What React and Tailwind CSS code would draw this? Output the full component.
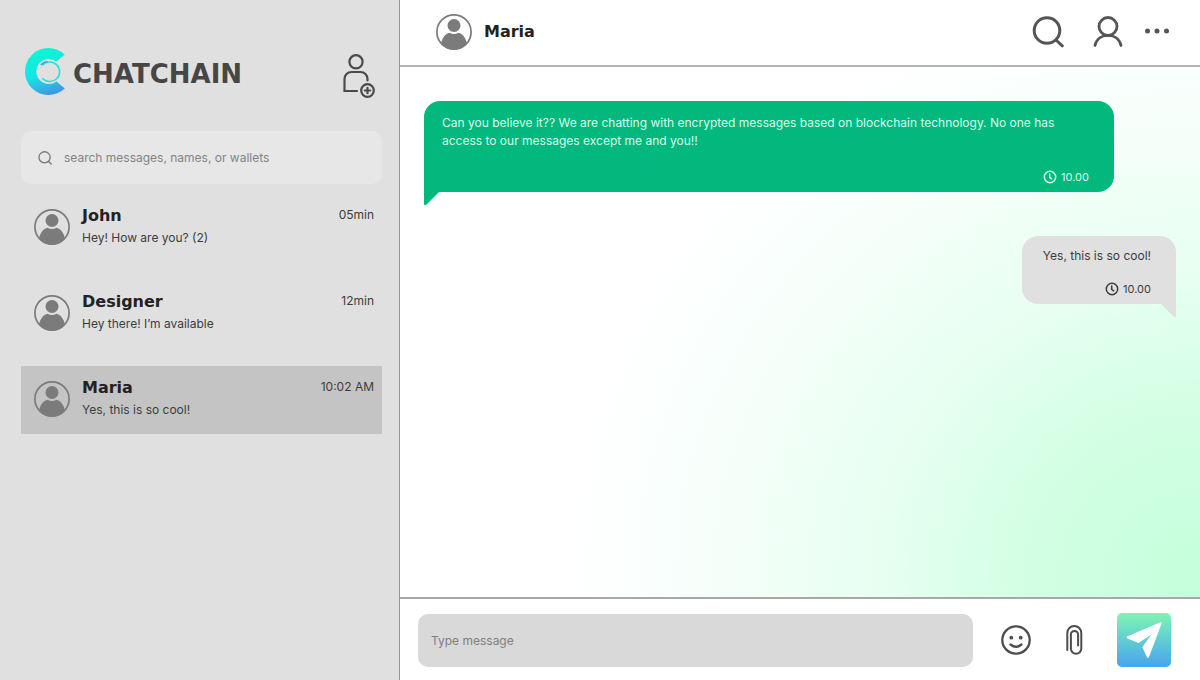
const chats = [
  { name: "John", text: "Hey! How are you? (2)", time: "05min", active: false },
  { name: "Designer", text: "Hey there! I’m available", time: "12min", active: false },
  { name: "Maria", text: "Yes, this is so cool!", time: "10:02 AM", active: true },
];

function Avatar() {
  return (
    <svg className="size-9 shrink-0" viewBox="0 0 36 36" fill="none" aria-hidden="true">
      <circle cx="18" cy="18" r="17.1" stroke="#7b7b7b" strokeWidth="1.7" />
      <circle cx="18" cy="11.500" r="6.500" fill="#7b7b7b" />
      <path d="M5 29.800C6 24 9.500 19.600 13.500 18.800Q18 21.200 22.500 18.800C26.500 19.600 30 24 31 29.800A17.600 17.600 0 0 1 5 29.800Z" fill="#7b7b7b" />
    </svg>
  );
}

function LogoMark() {
  return (
    <svg className="h-12 w-11 shrink-0" viewBox="0 0 44 48" fill="none" aria-hidden="true">
      <defs>
        <linearGradient id="mark" x1="16" y1="2" x2="30" y2="48" gradientUnits="userSpaceOnUse">
          <stop stopColor="#0cf5d4" />
          <stop offset="0.5" stopColor="#16e4e6" />
          <stop offset="1" stopColor="#4a8be0" />
        </linearGradient>
      </defs>
      <path d="M39.800 6.600A23.500 23.500 0 1 0 39.800 40.400L31.500 33.400A12.500 12.500 0 1 1 31.500 13.600Z" fill="url(#mark)" />
      <path d="M17.500 17.200A9.800 9.800 0 1 1 17.500 30.200" stroke="#27dfd8" strokeWidth="1.500" />
      <path d="M15.800 17.200A10 10 0 0 1 22.500 13.300" stroke="#3f9fe0" strokeWidth="1.300" />
    </svg>
  );
}

function AddContactIcon() {
  return (
    <svg className="h-11 w-8" viewBox="0 0 32 44" fill="none" stroke="#4a4a4a" strokeWidth="2.200" strokeLinecap="round" aria-hidden="true">
      <circle cx="13" cy="7.800" r="6.600" />
      <path d="M14 37H1.500V25A7 7 0 0 1 8.500 18H17.500A7 7 0 0 1 24.500 25V26.500" />
      <circle cx="24.500" cy="36.500" r="6.300" />
      <path d="M21.800 36.500H27.200M24.500 33.800V39.200" />
    </svg>
  );
}

function SearchIcon({ className }) {
  return (
    <svg className={className} viewBox="0 0 32 32" fill="none" stroke="currentColor" strokeLinecap="round" aria-hidden="true">
      <circle cx="15" cy="14.500" r="12.800" />
      <path d="M24 24L30.300 29.800" />
    </svg>
  );
}

function Clock() {
  return (
    <svg className="size-[14px]" viewBox="0 0 14 14" fill="none" stroke="currentColor" strokeWidth="1.500" strokeLinecap="round" aria-hidden="true">
      <circle cx="7" cy="7" r="5.700" />
      <path d="M6.700 3.900V7.300L8.600 8.800" />
    </svg>
  );
}

export default function App() {
  return (
    <div className="flex min-h-screen bg-white font-['Inter',sans-serif] text-[#3c3c3c]">
      <aside className="w-1/3 shrink-0 border-r border-[#999999] bg-[#e0e0e0] pt-12 pr-[17px] pl-[21px]">
        <header className="flex items-start justify-between pr-[7px] pl-1">
          <div className="flex items-center gap-1">
            <LogoMark />
            <h1 className="pt-[3px] font-['DejaVu_Sans',sans-serif] text-[26px] leading-8 font-bold text-[#464646]">CHATCHAIN</h1>
          </div>
          <button type="button" aria-label="Add contact" className="mt-[6px]">
            <AddContactIcon />
          </button>
        </header>

        <label className="mt-[33px] flex h-[53px] items-center gap-3 rounded-[10px] bg-[#e7e7e7] px-[17px] text-[#777777]">
          <SearchIcon className="size-[14px] stroke-3" />
          <input
            type="search"
            aria-label="Search"
            placeholder="search messages, names, or wallets"
            className="min-w-0 flex-1 bg-transparent text-xs leading-5 outline-none placeholder:text-[#848484]"
          />
        </label>

        <nav aria-label="Conversations" className="mt-[10px] flex flex-col gap-[18px]">
          {chats.map((chat) => (
            <button
              key={chat.name}
              type="button"
              className={`flex h-[68px] items-start gap-3 pr-2 pl-[13px] text-left ${chat.active ? "bg-[#c4c4c4]" : ""}`}
            >
              <span className="mt-[15px]">
                <Avatar />
              </span>
              <span className="mt-3 flex min-w-0 flex-1 flex-col gap-[3px]">
                <span className="flex items-start justify-between">
                  <span className="font-['DejaVu_Sans',sans-serif] text-base leading-5 font-bold text-[#222222]">{chat.name}</span>
                  <span className="text-xs leading-[18px]">{chat.time}</span>
                </span>
                <span className="text-xs leading-[18px]">{chat.text}</span>
              </span>
            </button>
          ))}
        </nav>
      </aside>

      <main className="flex min-w-0 flex-1 flex-col">
        <header className="flex h-[67px] items-center justify-between border-b-2 border-[#b4b4b4] pr-[30px] pb-0.5 pl-9">
          <div className="flex items-center gap-3">
            <Avatar />
            <h2 className="font-['DejaVu_Sans',sans-serif] text-base leading-5 font-bold text-[#222222]">Maria</h2>
          </div>
          <div className="flex items-center text-[#555555]">
            <button type="button" aria-label="Search conversation">
              <SearchIcon className="size-8 stroke-3" />
            </button>
            <button type="button" aria-label="Contact profile" className="ml-7">
              <svg className="size-8" viewBox="0 0 32 32" fill="none" stroke="currentColor" strokeWidth="2.800" strokeLinecap="round" aria-hidden="true">
                <circle cx="16" cy="10.500" r="9" />
                <path d="M3 29.500C4.500 22.500 10 19.300 16 19.300S27.500 22.500 29 29.500" />
              </svg>
            </button>
            <button type="button" aria-label="More options" className="ml-5">
              <svg className="h-8 w-[26px]" viewBox="0 0 26 32" fill="currentColor" aria-hidden="true">
                <circle cx="3.500" cy="15" r="2.500" />
                <circle cx="13" cy="15" r="2.500" />
                <circle cx="22.500" cy="15" r="2.500" />
              </svg>
            </button>
          </div>
        </header>

        <section
          aria-label="Messages"
          className="flex flex-1 flex-col bg-[radial-gradient(ellipse_80%_112%_at_100%_96%,#c4ffdb_0%,#d3ffe4_28%,#e8fff2_52%,#f7fffb_78%,#ffffff_100%)] pt-[34px] pr-6 pl-6"
        >
          <article className="relative mr-[62px] flex min-h-[91px] flex-col rounded-[16px] rounded-bl-none bg-[#02b87c] pt-[13px] pr-[25px] pb-[7px] pl-[18px] text-white">
            <p className="text-xs leading-[18px] text-[#d8fbec]">
              Can you believe it?? We are chatting with encrypted messages based on blockchain technology. No one has access to our messages except me and you!!
            </p>
            <div className="mt-auto flex items-center gap-1 self-end text-[11px] leading-4 text-[#d8fbec]">
              <Clock />
              <time>10.00</time>
            </div>
            <svg className="absolute top-full left-0 h-[14px] w-4" viewBox="0 0 16 14" fill="#02b87c" aria-hidden="true">
              <path d="M0 -1H16L2.500 12.500Q0 14 0 12Z" />
            </svg>
          </article>

          <article className="relative mt-[44px] flex min-h-[68px] flex-col self-end rounded-[16px] rounded-br-none bg-[#e0e0e0] pt-[11px] pr-[25px] pb-[7px] pl-[21px]">
            <p className="text-xs leading-[18px]">Yes, this is so cool!</p>
            <div className="mt-auto flex items-center gap-1 self-end text-[11px] leading-4">
              <Clock />
              <time>10.00</time>
            </div>
            <svg className="absolute top-full right-0 h-[14px] w-4" viewBox="0 0 16 14" fill="#e0e0e0" aria-hidden="true">
              <path d="M16 -1H0L13.500 12.500Q16 14 16 12Z" />
            </svg>
          </article>
        </section>

        <form className="flex h-[83px] items-center border-t-2 border-[#a8a8a8] pt-px pr-[29px] pl-[18px]" onSubmit={(e) => e.preventDefault()}>
          <input
            type="text"
            aria-label="Message"
            placeholder="Type message"
            className="h-[53px] min-w-0 flex-1 rounded-[10px] bg-[#d9d9d9] px-[13px] text-xs leading-5 outline-none placeholder:text-[#808080]"
          />
          <button type="button" aria-label="Insert emoji" className="ml-7 text-[#4d4d4d]">
            <svg className="size-[30px]" viewBox="0 0 30 30" fill="none" stroke="currentColor" strokeWidth="2.300" strokeLinecap="round" aria-hidden="true">
              <circle cx="15" cy="15" r="13.700" />
              <path d="M9.500 19.500Q15 24 20.500 19.500" />
              <circle cx="10.300" cy="12.700" r="1.900" fill="currentColor" stroke="none" />
              <circle cx="19.700" cy="12.700" r="1.900" fill="currentColor" stroke="none" />
            </svg>
          </button>
          <button type="button" aria-label="Attach file" className="ml-[34px] text-[#4d4d4d]">
            <svg className="h-[30px] w-[18px]" viewBox="0 0 18 30" fill="none" stroke="currentColor" strokeWidth="2" strokeLinecap="round" aria-hidden="true">
              <path d="M2.300 25V8A7 7 0 0 1 16.300 8V23.500A5.200 5.200 0 0 1 5.900 23.500V9.500A3.600 3.600 0 0 1 13.100 9.500V20.500" />
            </svg>
          </button>
          <button type="submit" aria-label="Send message" className="ml-[34px] flex size-[54px] items-center justify-center rounded-[5px] bg-linear-to-b from-[#80f4b0] to-[#49a4ec]">
            <svg className="size-[54px]" viewBox="0 0 54 54" fill="#ffffff" aria-hidden="true">
              <path d="M43.500 9.200Q45 8.800 44.600 10.500L32 44Q31 46 29.800 44L25.300 34L34.500 21.500L21.500 30L10 25.300Q8.500 24.300 10.500 23.300Z" />
            </svg>
          </button>
        </form>
      </main>
    </div>
  );
}
